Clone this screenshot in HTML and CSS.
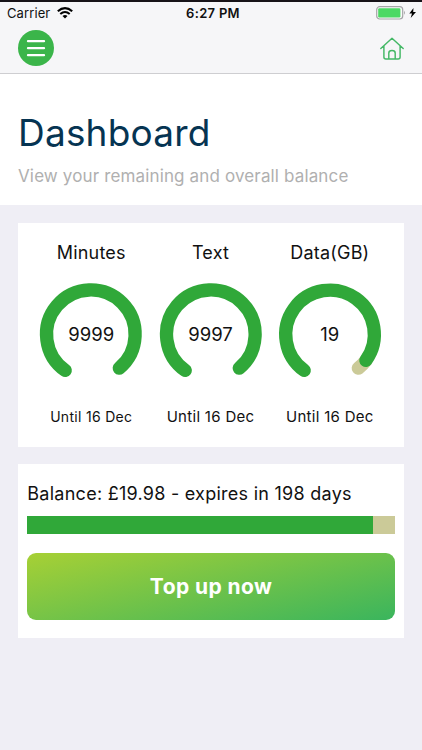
FILE: index.html
```html
<!DOCTYPE html>
<html lang="en">
<head>
<meta charset="utf-8">
<title>Dashboard</title>
<link rel="stylesheet" href="styles.css">
</head>
<body>
<header class="topbar">
  <div class="status">
    <div class="carrier"><span>Carrier</span>
      <svg width="16" height="12" viewBox="0 0 16 12" fill="none" stroke="#000" stroke-width="2.1"><path d="M.8 4.3Q8-2 15.2 4.3M3.3 7Q8 3 12.7 7"/><path d="M5.5 9Q8 7.2 10.5 9L8 11.5Z" fill="#000" stroke="none"/></svg>
    </div>
    <div class="time">6:27 PM</div>
    <div class="power">
      <svg width="41" height="14" viewBox="0 0 41 14"><rect x=".7" y=".7" width="26" height="12.3" rx="3" fill="#fafafa" stroke="#a4a4a6" stroke-width="1.2"/><rect x="2.2" y="2.2" width="22.2" height="9.3" rx="1.2" fill="#4cd964"/><path d="M28 4.8q1.9 2 0 4z" fill="#a4a4a6"/><path d="M37.5 2.1 33.3 7.5h2.7L34.7 12 40 6.1h-2.8z" fill="#000"/></svg>
    </div>
  </div>
  <nav class="nav">
    <svg width="36" height="36" viewBox="0 0 36 36"><circle cx="18" cy="18" r="18" fill="#3bb54a"/><path d="M10 11.2H26M10 18.2H26M10 25.2H26" stroke="#fff" stroke-width="2.3" stroke-linecap="round"/></svg>
    <svg class="home" width="24" height="24" viewBox="0 0 24 24" fill="none" stroke="#44b866" stroke-width="1.45" stroke-linecap="round" stroke-linejoin="round"><path d="M.8 11.5 12 1.2 23.2 11.5M3.9 9v11q0 2 2 2H18.1q2 0 2-2V9M8.8 22v-6q0-2.5 3.2-2.5t3.2 2.5v6"/></svg>
  </nav>
</header>
<section class="intro">
  <h1>Dashboard</h1>
  <p>View your remaining and overall balance</p>
</section>
<main class="content">
  <section class="card usage">
    <article class="meter minutes">
      <h2>Minutes</h2>
      <div class="dial"><svg viewBox="0 0 102 102"><path class="used" d="M25.2 87.4A44.3 44.3 0 1 1 79.3 85.2"/></svg><strong>9999</strong></div>
      <p>Until 16 Dec</p>
    </article>
    <article class="meter">
      <h2>Text</h2>
      <div class="dial"><svg viewBox="0 0 102 102"><path class="used" d="M25.2 87.4A44.3 44.3 0 1 1 79.3 85.2"/></svg><strong>9997</strong></div>
      <p>Until 16 Dec</p>
    </article>
    <article class="meter">
      <h2>Data(GB)</h2>
      <div class="dial"><svg viewBox="0 0 102 102"><path class="rest" d="M86.9 77.4A44.3 44.3 0 0 1 79.3 85.2"/><path class="used" d="M25.2 87.4A44.3 44.3 0 1 1 86.9 77.4"/></svg><strong>19</strong></div>
      <p>Until 16 Dec</p>
    </article>
  </section>
  <section class="card balance">
    <p class="summary">Balance: £19.98 - expires in 198 days</p>
    <div class="bar"><div class="fill"></div></div>
    <button class="topup">Top up now</button>
  </section>
</main>
</body>
</html>
```
FILE: styles.css
```css
* { box-sizing: border-box; }
body { margin: 0; height: 750px; overflow: hidden; background: #efeef5; color: #111; font-family: Inter, sans-serif; }
h1, h2, p { margin: 0; white-space: nowrap; }
svg { display: block; flex: none; overflow: visible; }
.topbar { height: 74px; background: #f6f6f8; border-top: 2px solid #171318; border-bottom: 1px solid #ceced1; }
.status { height: 22px; display: grid; grid-template-columns: 1fr auto 1fr; align-items: center; padding: 0 5px 0 7px; font-size: 13px; line-height: 22px; color: #111; }
.carrier { display: flex; align-items: center; gap: 7px; letter-spacing: .1px; }
.time { font-weight: 600; letter-spacing: .3px; padding-left: 2px; }
.power { justify-self: end; }
.nav { display: flex; justify-content: space-between; align-items: center; height: 48px; padding: 0 18px; }
.home { margin-top: 2px; }
.intro { height: 130.7px; padding: 36px 18px 0; background: #fff; }
h1 { font-size: 37px; font-weight: 400; line-height: 46px; color: #063452; letter-spacing: .2px; }
.intro p { margin-top: 8px; font-size: 17px; line-height: 24px; color: #b0b0b0; letter-spacing: .14px; }
.content { padding: 18px 18.3px; display: flex; flex-direction: column; gap: 17.3px; }
.card { background: #fff; }
.usage { height: 224px; display: grid; grid-template-columns: repeat(3, 119.3px); padding: 17px 0 0 13.3px; }
.meter { display: flex; flex-direction: column; align-items: center; }
.meter h2 { font-size: 18px; font-weight: 400; line-height: 26px; letter-spacing: .2px; }
.dial { width: 102px; height: 102px; margin-top: 17.6px; display: grid; place-items: center; }
.dial svg, .dial strong { grid-area: 1 / 1; }
.dial svg { width: 102px; height: 102px; }
.dial path { fill: none; stroke-width: 13.3; stroke-linecap: round; }
.dial .used { stroke: #30a839; }
.dial .rest { stroke: #cbca98; }
.dial strong { font-weight: 400; font-size: 18.5px; }
.meter p { margin-top: 20.4px; font-size: 15px; line-height: 22px; letter-spacing: .3px; }
.minutes p { font-size: 14px; }
.balance { height: 173.7px; padding: 16px 9px 0; }
.summary { font-size: 18px; line-height: 27px; letter-spacing: .26px; }
.bar { height: 18px; margin-top: 9px; background: #cbca98; }
.fill { width: 94.2%; height: 100%; background: #30a839; }
.topup { display: block; width: 100%; height: 67px; margin-top: 19px; padding: 2px 0 0; border: 0; border-radius: 9px; background: linear-gradient(167deg, #a7d035, #3ab55d); color: #fff; font: 700 21px/28px Inter, sans-serif; letter-spacing: .4px; }
```
